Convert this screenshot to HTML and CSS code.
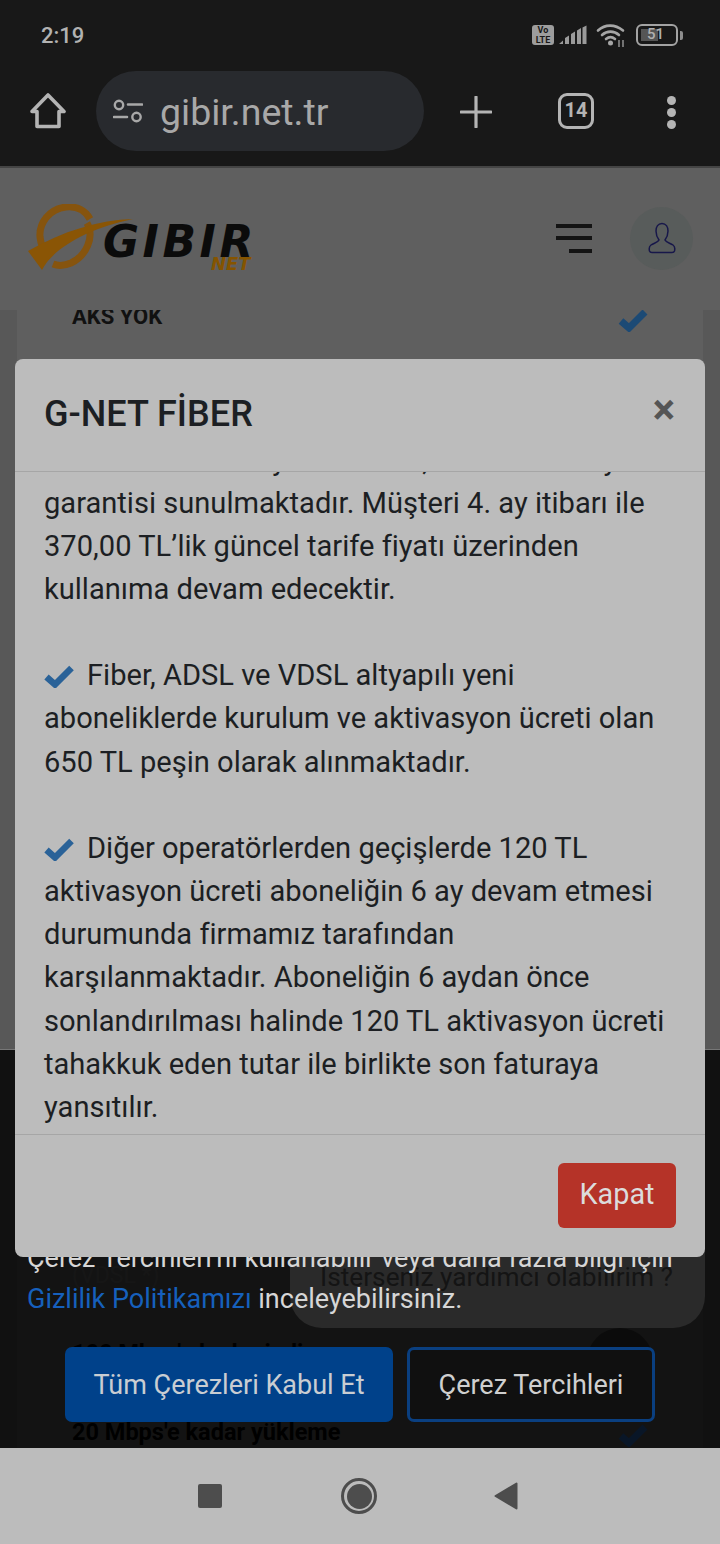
FILE: index.html
```html
<!DOCTYPE html>
<html lang="tr">
<head>
    <meta charset="UTF-8">
    <meta name="viewport" content="width=device-width, initial-scale=1.0">
    <title>G-NET Fiber</title>
    <link rel="stylesheet" href="styles.css">
</head>
<body>
    <div class="status-bar">
        <span class="clock">2:19</span>
        <div class="status-icons">
            <span class="volte">Vo<br>LTE</span>
            <svg class="signal" width="28" height="20" viewBox="0 0 28 20">
                <path d="M0 19 L4 15.500 V19 Z M6 19 V13 L10 10.500 V19 Z M12 19 V9 L16 6.500 V19 Z M18 19 V5.500 L22 3 V19 Z M23.500 19 V2.500 L27.500 0.500 V19 Z" fill="#9a9a9a"/>
            </svg>
            <svg class="wifi" width="30" height="24" viewBox="0 0 30 24">
                <path d="M2 7.500 C9 1 19 1 27 7.500 M6 12 C11 7.500 18 7.500 23 12 M10 16 C13 13.500 16 13.500 19 16" fill="none" stroke="#a6a6a6" stroke-width="2.600" stroke-linecap="round"/>
                <circle cx="14.500" cy="20" r="2.500" fill="#a6a6a6"/>
                <path d="M23 17 V24 M27 17 V24" stroke="#8a8a8a" stroke-width="1.600"/>
            </svg>
            <span class="battery"><span class="battery-level"></span><span class="battery-num">51</span></span>
            <span class="battery-tip"></span>
        </div>
    </div>

    <div class="browser-bar">
        <svg class="home-icon" width="36" height="36" viewBox="0 0 36 36">
            <path d="M18 2 L34 18.500 H29 V33.500 H7 V18.500 H2 Z" fill="none" stroke="#b4b4b4" stroke-width="3.600" stroke-linejoin="round"/>
        </svg>
        <div class="url-pill">
            <svg width="30" height="24" viewBox="0 0 30 24">
                <circle cx="6" cy="6" r="4.200" fill="none" stroke="#a8a8a8" stroke-width="2.400"/>
                <path d="M15 5.500 H29 M1 18 H14" stroke="#a8a8a8" stroke-width="2.600" stroke-linecap="round"/>
                <circle cx="23.500" cy="18" r="4.200" fill="none" stroke="#a8a8a8" stroke-width="2.400"/>
            </svg>
            <span class="url-text">gibir.net.tr</span>
        </div>
        <svg class="plus-icon" width="32" height="32" viewBox="0 0 32 32">
            <path d="M16 1 V31 M1 16 H31" stroke="#b4b4b4" stroke-width="3.200" stroke-linecap="round"/>
        </svg>
        <span class="tabs-count">14</span>
        <span class="menu-dots"><i></i><i></i><i></i></span>
    </div>

    <div class="page">
        <header class="site-header">
            <div class="logo">
                <svg class="logo-mark" width="110" height="70" viewBox="0 0 110 70">
                    <path d="M63 15 C58 6 49 2 39 3 C22 5 12 19 13 33 C14 41 16 45 19 49" fill="none" stroke="#86540e" stroke-width="7"/>
                    <path d="M60 19 C68 33 59 52 44 59 C37 62 31 62 26 60" fill="none" stroke="#86540e" stroke-width="7"/>
                    <path d="M106 15 C72 16 36 27 1 47 L15 66 C26 44 62 24 106 15 Z" fill="#8a5505"/>
                </svg>
                <span class="logo-name">GIBIR</span>
                <span class="logo-net">NET</span>
            </div>
            <div class="header-actions">
                <span class="burger"><i></i><i></i><i class="short"></i></span>
                <span class="user-btn">
                    <svg width="28" height="32" viewBox="0 0 28 32">
                        <path d="M14 1.500 C18 1.500 20 5 20 9 C20 13 18.500 16 17 18 C18 20.500 22 21 25 23 C27 24.500 27 27 26.500 29 C26 30.500 25 30.500 24 30.500 H4 C3 30.500 2 30.500 1.500 29 C1 27 1 24.500 3 23 C6 21 10 20.500 11 18 C9.500 16 8 13 8 9 C8 5 10 1.500 14 1.500 Z" fill="none" stroke="#17174a" stroke-width="1.500"/>
                    </svg>
                </span>
            </div>
        </header>

        <div class="page-content">
            <div class="card">
                <div class="row row-first"><span>AKS YOK</span>
                    <svg class="check-icon dark" viewBox="0 0 30 24"><path d="M3 13 L11 20 L27 4" fill="none" stroke="currentColor" stroke-width="7"/></svg>
                </div>
                <div class="rows-hidden"></div>
                <div class="row-note">(VDSL *)</div>
                <div class="row row-download"><span>100 Mbps'e kadar indirme</span></div>
                <div class="row row-speed"><span>20 Mbps'e kadar yükleme</span>
                    <svg class="check-icon darker" viewBox="0 0 30 24"><path d="M3 13 L11 20 L27 4" fill="none" stroke="currentColor" stroke-width="7"/></svg>
                </div>
            </div>
        </div>

        <div class="chat-bubble">İsterseniz yardımcı olabilirim ?</div>
        <div class="scroll-top">
            <svg width="32" height="20" viewBox="0 0 32 20"><path d="M3 17 L16 4 L29 17" fill="none" stroke="#777" stroke-width="5"/></svg>
        </div>

        <div class="cookie-banner">
            <p class="cookie-text">Çerez Tercihleri'ni kullanabilir veya daha fazla bilgi için
                <a href="#">Gizlilik Politikamızı</a> inceleyebilirsiniz.</p>
            <div class="cookie-actions">
                <button class="btn-accept">Tüm Çerezleri Kabul Et</button>
                <button class="btn-prefs">Çerez Tercihleri</button>
            </div>
        </div>

        <div class="modal">
            <div class="modal-header">
                <h2>G-NET FİBER</h2>
                <span class="modal-close">×</span>
            </div>
            <div class="modal-body">
                <p>Bu tarife ile ilk 3 ay 250.00 TL, taahhütlü 6 ay<br>
                garantisi sunulmaktadır. Müşteri 4. ay itibarı ile 370,00 TL’lik güncel tarife fiyatı üzerinden kullanıma devam edecektir.<br><br>
                <svg class="check-icon" viewBox="0 0 30 24"><path d="M2.500 13 L11 20.500 L27.500 4" fill="none" stroke="currentColor" stroke-width="6.500"/></svg>Fiber, ADSL ve VDSL altyapılı yeni aboneliklerde kurulum ve aktivasyon ücreti olan 650 TL peşin olarak alınmaktadır.<br><br>
                <svg class="check-icon" viewBox="0 0 30 24"><path d="M2.500 13 L11 20.500 L27.500 4" fill="none" stroke="currentColor" stroke-width="6.500"/></svg>Diğer operatörlerden geçişlerde 120 TL aktivasyon ücreti aboneliğin 6 ay devam etmesi durumunda firmamız tarafından karşılanmaktadır. Aboneliğin 6 aydan önce sonlandırılması halinde 120 TL aktivasyon ücreti tahakkuk eden tutar ile birlikte son faturaya yansıtılır.</p>
            </div>
            <div class="modal-footer">
                <button class="btn-close">Kapat</button>
            </div>
        </div>
    </div>

    <div class="nav-bar">
        <span class="nav-square"></span>
        <span class="nav-circle"><i></i></span>
        <svg class="nav-back" width="24" height="28" viewBox="0 0 24 28"><path d="M22.500 1.500 V26.500 L1.500 14 Z" fill="#4d4d4d" stroke="#4d4d4d" stroke-width="2" stroke-linejoin="round"/></svg>
    </div>
</body>
</html>
```

FILE: styles.css
```css
* {
    box-sizing: border-box;
}

body {
    margin: 0;
    width: 720px;
    height: 1544px;
    overflow: hidden;
    font-family: 'Roboto', sans-serif;
    background: #181818;
}

/* phone status bar */
.status-bar {
    height: 70px;
    padding: 0 37px 0 41px;
    display: flex;
    justify-content: space-between;
    align-items: center;
    background: #181818;
}

.clock {
    font-size: 22px;
    font-weight: 500;
    color: #b2b2b2;
}

.status-icons {
    display: flex;
    align-items: center;
    gap: 5px;
}

.volte {
    width: 22px;
    height: 20px;
    border-radius: 3px;
    background: #9d9d9d;
    color: #181818;
    font-size: 9px;
    font-weight: 700;
    line-height: 9.500px;
    text-align: center;
    padding-top: 1px;
}

.signal {
    margin-right: 4px;
}

.battery {
    position: relative;
    width: 42px;
    height: 22px;
    margin-left: 5px;
    border: 2.500px solid #a3a3a3;
    border-radius: 6px;
}

.battery-level {
    position: absolute;
    left: 3px;
    top: 3px;
    bottom: 3px;
    width: 17px;
    background: #555;
}

.battery-num {
    position: absolute;
    left: 9px;
    top: -1px;
    font-size: 15px;
    line-height: 19px;
    font-weight: 500;
    color: #b0b0b0;
}

.battery-tip {
    width: 3px;
    height: 9px;
    margin-left: -3px;
    background: #8d8d8d;
    border-radius: 0 2px 2px 0;
}

/* browser toolbar */
.browser-bar {
    height: 98px;
    display: flex;
    align-items: flex-start;
    padding-top: 1px;
    background: #181818;
    border-bottom: 2px solid #444;
    position: relative;
}

.home-icon {
    margin: 22px 0 0 30px;
}

.url-pill {
    width: 328px;
    height: 80px;
    margin-left: 30px;
    padding-left: 17px;
    display: flex;
    align-items: center;
    gap: 17px;
    border-radius: 40px;
    background: #282a2e;
}

.url-text {
    font-size: 37.500px;
    color: #a8a8a8;
    padding-top: 2px;
}

.plus-icon {
    margin: 25px 0 0 36px;
}

.tabs-count {
    width: 36px;
    height: 36px;
    margin: 22px 0 0 66px;
    border: 3.500px solid #b4b4b4;
    border-radius: 9px;
    color: #b4b4b4;
    font-size: 20px;
    font-weight: 700;
    line-height: 29px;
    text-align: center;
}

.menu-dots {
    margin: 25px 0 0 73px;
    display: flex;
    flex-direction: column;
    gap: 3px;
}

.menu-dots i {
    width: 9px;
    height: 9px;
    border-radius: 50%;
    background: #b4b4b4;
}

/* page under the dimmer */
.page {
    position: relative;
    height: 1280px;
    overflow: hidden;
    background: #585858;
}

.site-header {
    height: 142px;
    padding: 0 27px 2px;
    display: flex;
    justify-content: space-between;
    align-items: center;
    background: #5f5f5f;
    position: relative;
    z-index: 1;
}

.logo {
    position: relative;
    width: 226px;
    height: 70px;
    margin-top: 2px;
}

.logo-mark {
    position: absolute;
    left: 0;
    top: 0;
}

.logo-name {
    position: absolute;
    left: 76px;
    top: 23px;
    font-family: 'DejaVu Sans', sans-serif;
    font-size: 44px;
    line-height: 30px;
    font-weight: 700;
    font-style: italic;
    letter-spacing: 3.500px;
    color: #0b0b0b;
}

.logo-net {
    position: absolute;
    left: 184px;
    top: 53px;
    font-family: 'DejaVu Sans', sans-serif;
    font-size: 18px;
    line-height: 14px;
    font-weight: 700;
    font-style: italic;
    color: #855400;
}

.header-actions {
    display: flex;
    align-items: center;
    gap: 38px;
}

.burger {
    width: 36px;
    display: flex;
    flex-direction: column;
    align-items: flex-end;
    gap: 8.500px;
}

.burger i {
    width: 36px;
    height: 4px;
    background: #141414;
}

.burger i.short {
    width: 23px;
}

.user-btn {
    width: 63px;
    height: 63px;
    border-radius: 50%;
    background: #585c5b;
    display: flex;
    align-items: center;
    justify-content: center;
}

.page-content {
    padding: 0 17px;
}

.card {
    background: #5f5f5f;
    margin-top: -18px;
    padding: 0 54px 0 55px;
    height: 1200px;
}

.row {
    display: flex;
    justify-content: space-between;
    align-items: center;
    font-size: 23.500px;
    font-weight: 700;
    color: #111;
}

.row-first {
    height: 48px;
}

.row-first span {
    font-size: 22px;
}

.rows-hidden {
    height: 903px;
}

.row-note {
    height: 72px;
    font-size: 23px;
    line-height: 66px;
    color: #707070;
}

.row-download {
    height: 76px;
    color: #000;
}

.row-speed {
    height: 82px;
    color: #000;
}

.check-icon {
    width: 30px;
    height: 24px;
    color: #1c4a75;
}

.check-icon.dark {
    width: 32px;
    margin-top: 8px;
}

.check-icon.darker {
    width: 32px;
    margin-top: 6px;
    color: #2f6fc0;
}

.chat-bubble {
    position: absolute;
    left: 290px;
    right: 15px;
    top: 1000px;
    height: 160px;
    padding: 89px 0 0 30px;
    border-radius: 32px;
    background: #d2d2d2;
    font-size: 26.250px;
    line-height: 40px;
    color: #666;
}

.scroll-top {
    position: absolute;
    left: 587px;
    top: 1160px;
    width: 66px;
    height: 66px;
    border-radius: 50%;
    background: #383838;
    display: flex;
    align-items: center;
    justify-content: center;
}

/* cookie notice */
.cookie-banner {
    position: absolute;
    left: 0;
    right: 0;
    top: 881px;
    bottom: 0;
    padding: 0 27px 26px;
    display: flex;
    flex-direction: column;
    justify-content: flex-end;
    background: rgba(0, 0, 0, 0.8);
    border-top: 1px solid #777;
}

.cookie-text {
    margin: 0 0 27px;
    font-size: 27px;
    line-height: 41px;
    color: #d6d6d6;
}

.cookie-text a {
    color: #1660bc;
    text-decoration: none;
}

.cookie-actions {
    display: flex;
    justify-content: center;
    gap: 14px;
    margin: 0 38px;
}

.cookie-actions button {
    height: 75px;
    border-radius: 7px;
    font-family: inherit;
    font-size: 27px;
}

.btn-accept {
    width: 328px;
    border: none;
    background: #00418a;
    color: #c9cdd2;
}

.btn-prefs {
    width: 248px;
    border: 3px solid #0a3f80;
    background: #101010;
    color: #cfcfcf;
}

/* modal */
.modal {
    position: absolute;
    left: 15px;
    right: 15px;
    top: 191px;
    height: 898px;
    display: flex;
    flex-direction: column;
    border-radius: 8px;
    background: #bcbcbc;
}

.modal-header {
    height: 113px;
    padding: 0 29px 2px;
    display: flex;
    justify-content: space-between;
    align-items: center;
    border-bottom: 1px solid #a6a6a6;
}

.modal-header h2 {
    margin: 0;
    font-size: 36px;
    font-weight: 500;
    color: #1c1f23;
}

.modal-close {
    font-size: 42px;
    font-weight: 700;
    color: #555;
    line-height: 42px;
    margin-bottom: 8px;
    margin-right: 1px;
}

.modal-body {
    flex: 1;
    min-height: 0;
    padding: 0 29px 5px;
    overflow: hidden;
    display: flex;
    flex-direction: column;
    justify-content: flex-end;
}

.modal-body p {
    margin: 0;
    font-size: 29.100px;
    line-height: 43.150px;
    color: #1c1f23;
}

.modal-body .check-icon {
    vertical-align: -3px;
    margin-right: 13px;
    color: #2a6298;
}

.modal-footer {
    height: 123px;
    padding: 0 29px 29px;
    display: flex;
    justify-content: flex-end;
    align-items: flex-end;
    border-top: 1px solid #a6a6a6;
}

.btn-close {
    width: 118px;
    height: 65px;
    padding-bottom: 4px;
    border: none;
    border-radius: 6px;
    background: #b53328;
    color: #dcdcdc;
    font-family: inherit;
    font-size: 28.800px;
}

/* android nav */
.nav-bar {
    height: 96px;
    background: #bcbcbc;
    display: flex;
    align-items: center;
    padding-left: 198px;
    gap: 119px;
    position: relative;
}

.nav-square {
    width: 24px;
    height: 24px;
    border-radius: 2px;
    background: #4d4d4d;
}

.nav-circle {
    width: 36px;
    height: 36px;
    border: 3px solid #4d4d4d;
    border-radius: 50%;
    display: flex;
    align-items: center;
    justify-content: center;
}

.nav-circle i {
    width: 25px;
    height: 25px;
    border-radius: 50%;
    background: #4d4d4d;
}

.nav-back {
    margin-left: -2px;
}
```
